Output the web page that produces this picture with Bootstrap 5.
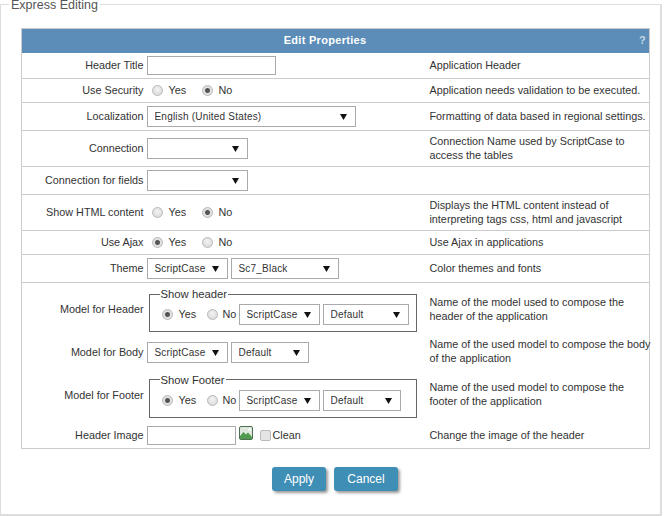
<!DOCTYPE html>
<html lang="en">
<head>
    <meta charset="UTF-8">
    <meta name="viewport" content="width=device-width, initial-scale=1.0">
    <title>Express Editing</title>
    <link href="https://cdn.jsdelivr.net/npm/bootstrap@5.3.0/dist/css/bootstrap.min.css" rel="stylesheet">
    <style>
        body {
            font-family: "Liberation Sans", Arial, sans-serif;
            font-size: 10.800px;
            color: #333;
            background: #fff;
            overflow: hidden;
        }
        .express-box {
            width: 662px;
            height: 516px;
            padding: 0;
            border: 2px solid #ddd;
            border-left-width: 1px;
            border-top-width: 1px;
        }
        .express-box > legend {
            float: none;
            width: auto;
            margin: 0 0 0 8px;
            padding: 1px 2px 0;
            font-size: 12.500px;
            line-height: 8px;
            color: #555;
        }
        .props-table {
            width: 629px;
            table-layout: fixed;
            border: 1px solid #ccc;
            margin: 19px 0 0 20px;
            color: #333;
        }
        .col-label { width: 125px; }
        .col-help { width: 220px; }
        .props-table td {
            padding: 3px 0;
            border-bottom: 1px solid #ccc;
            vertical-align: middle;
            line-height: 15px;
        }
        .props-table tr.no-line td { border-bottom: 0; }
        .props-table tr.row-tight td { height: 24px; padding-top: 0; padding-bottom: 0; }
        .props-table tr.row-model-h td { height: 55px; padding-top: 0; padding-bottom: 0; }
        .props-table tr.row-model-b td { height: 30px; padding-top: 0; padding-bottom: 0; }
        .props-table tr.row-model-f td { height: 56px; padding-top: 0; padding-bottom: 0; }
        .props-table .label-cell { padding-right: 3px; text-align: right; }
        .props-table .help-cell { padding: 3px 0 4px; line-height: 14px; white-space: nowrap; }
        .props-table tr.no-line td.help-cell { padding-bottom: 2px; }
        .props-table .props-head {
            height: 24px;
            padding: 0;
            border-bottom: 0;
            background: #5b8db8;
            color: #fff;
            font-size: 11px;
            font-weight: bold;
            letter-spacing: .3px;
        }
        .props-head .help-mark { width: 21px; color: #c5d6e6; padding-right: 3px; text-align: right; }
        .plain-input {
            display: block;
            height: 19px;
            border: 1px solid #aaa;
            background: #fff;
        }
        .w-title { width: 129px; }
        .w-image { width: 89px; }
        .select-pair { gap: 3px; }
        .plain-select {
            display: block;
            height: 21px;
            padding: 0 14px 0 7px;
            font-size: 10px;
            letter-spacing: .2px;
            color: #333;
            border: 1px solid #aaa;
            border-radius: 0;
            background: #fff url("data:image/svg+xml,%3Csvg xmlns='http://www.w3.org/2000/svg' width='7' height='7'%3E%3Cpath d='M0 1h7L3.500 7z' fill='%23111'/%3E%3C/svg%3E") no-repeat right 8px center;
            appearance: none;
        }
        .w-local { width: 209px; }
        .w-conn { width: 101px; }
        .w-sc { width: 81px; }
        .w-sc7 { width: 108px; }
        .w-def { width: 78px; }
        .w-def-h { width: 86px; }
        .pick-radio {
            appearance: none;
            width: 11px;
            height: 11px;
            margin: 0;
            flex: none;
            border: 1px solid #bbb;
            border-radius: 50%;
            background: radial-gradient(circle at 50% 40%, #f4f4f4, #d4d4d4);
        }
        .pick-radio:checked {
            background: radial-gradient(circle, #555 0 2px, #e2e2e2 3px, #d8d8d8);
        }
        .pick-check {
            appearance: none;
            width: 11px;
            height: 11px;
            margin: 0 2px 0 7px;
            border: 1px solid #bbb;
            border-radius: 2px;
            background: #e4e4e4;
        }
        .image-pick { margin: 0 0 5px 3px; }
        .radio-row { padding-left: 5px; }
        .radio-yes { width: 50px; }
        .radio-yes label, .radio-no label { margin-left: 6px; }
        .model-box {
            width: 268px;
            margin: 0 0 0 2px;
            padding: 3px 0 6px 12px;
            border: 1px solid #666;
        }
        .model-box > legend {
            float: none;
            width: auto;
            margin: 0 0 0 -2px;
            padding: 0 1px;
            font-size: 11.300px;
            line-height: 14px;
        }
        .model-box .radio-yes { width: 45px; }
        .model-box .radio-no { width: 32px; }
        .model-box .radio-no label { margin-left: 5px; }
        .action-btn {
            height: 24px;
            padding: 0;
            font-size: 12px;
            color: #fff;
            background: #3f8eb5;
            border: 0;
            border-radius: 3px;
            box-shadow: 2px 2px 3px #999;
        }
        .action-apply { width: 54px; }
        .action-cancel { width: 64px; }
        .action-row { margin: 18px 0 0 0; padding-left: 271px; }
    </style>
</head>

<body>
    <fieldset class="express-box">
        <legend>Express Editing</legend>
        <table class="props-table">
            <colgroup>
                <col class="col-label">
                <col>
                <col class="col-help">
            </colgroup>
            <tr>
                <td colspan="3" class="props-head">
                    <div class="d-flex">
                        <div class="flex-grow-1 text-center">Edit Properties</div>
                        <div class="help-mark">?</div>
                    </div>
                </td>
            </tr>
            <tr>
                <td class="label-cell">Header Title</td>
                <td><input type="text" class="plain-input w-title"></td>
                <td class="help-cell">Application Header</td>
            </tr>
            <tr class="row-tight">
                <td class="label-cell">Use Security</td>
                <td>
                    <div class="d-flex align-items-center radio-row">
                        <div class="d-flex align-items-center radio-yes"><input type="radio" class="pick-radio" name="sec"><label>Yes</label></div>
                        <div class="d-flex align-items-center radio-no"><input type="radio" class="pick-radio" name="sec" checked><label>No</label></div>
                    </div>
                </td>
                <td class="help-cell">Application needs validation to be executed.</td>
            </tr>
            <tr>
                <td class="label-cell">Localization</td>
                <td><select class="plain-select w-local"><option>English (United States)</option></select></td>
                <td class="help-cell">Formatting of data based in regional settings.</td>
            </tr>
            <tr>
                <td class="label-cell">Connection</td>
                <td><select class="plain-select w-conn"><option></option></select></td>
                <td class="help-cell">Connection Name used by ScriptCase to<br>access the tables</td>
            </tr>
            <tr>
                <td class="label-cell">Connection for fields</td>
                <td><select class="plain-select w-conn"><option></option></select></td>
                <td class="help-cell"></td>
            </tr>
            <tr>
                <td class="label-cell">Show HTML content</td>
                <td>
                    <div class="d-flex align-items-center radio-row">
                        <div class="d-flex align-items-center radio-yes"><input type="radio" class="pick-radio" name="html"><label>Yes</label></div>
                        <div class="d-flex align-items-center radio-no"><input type="radio" class="pick-radio" name="html" checked><label>No</label></div>
                    </div>
                </td>
                <td class="help-cell">Displays the HTML content instead of<br>interpreting tags css, html and javascript</td>
            </tr>
            <tr class="row-tight">
                <td class="label-cell">Use Ajax</td>
                <td>
                    <div class="d-flex align-items-center radio-row">
                        <div class="d-flex align-items-center radio-yes"><input type="radio" class="pick-radio" name="ajax" checked><label>Yes</label></div>
                        <div class="d-flex align-items-center radio-no"><input type="radio" class="pick-radio" name="ajax"><label>No</label></div>
                    </div>
                </td>
                <td class="help-cell">Use Ajax in applications</td>
            </tr>
            <tr>
                <td class="label-cell">Theme</td>
                <td>
                    <div class="d-flex select-pair">
                        <select class="plain-select w-sc"><option>ScriptCase</option></select>
                        <select class="plain-select w-sc7"><option>Sc7_Black</option></select>
                    </div>
                </td>
                <td class="help-cell">Color themes and fonts</td>
            </tr>
            <tr class="no-line row-model-h">
                <td class="label-cell">Model for Header</td>
                <td>
                    <fieldset class="model-box">
                        <legend>Show header</legend>
                        <div class="d-flex align-items-center">
                            <div class="d-flex align-items-center radio-yes"><input type="radio" class="pick-radio" name="mh" checked><label>Yes</label></div>
                            <div class="d-flex align-items-center radio-no"><input type="radio" class="pick-radio" name="mh"><label>No</label></div>
                            <div class="d-flex select-pair">
                                <select class="plain-select w-sc"><option>ScriptCase</option></select>
                                <select class="plain-select w-def-h"><option>Default</option></select>
                            </div>
                        </div>
                    </fieldset>
                </td>
                <td class="help-cell">Name of the model used to compose the<br>header of the application</td>
            </tr>
            <tr class="no-line row-model-b">
                <td class="label-cell">Model for Body</td>
                <td>
                    <div class="d-flex select-pair">
                        <select class="plain-select w-sc"><option>ScriptCase</option></select>
                        <select class="plain-select w-def"><option>Default</option></select>
                    </div>
                </td>
                <td class="help-cell">Name of the used model to compose the body<br>of the application</td>
            </tr>
            <tr class="no-line row-model-f">
                <td class="label-cell">Model for Footer</td>
                <td>
                    <fieldset class="model-box">
                        <legend>Show Footer</legend>
                        <div class="d-flex align-items-center">
                            <div class="d-flex align-items-center radio-yes"><input type="radio" class="pick-radio" name="mf" checked><label>Yes</label></div>
                            <div class="d-flex align-items-center radio-no"><input type="radio" class="pick-radio" name="mf"><label>No</label></div>
                            <div class="d-flex select-pair">
                                <select class="plain-select w-sc"><option>ScriptCase</option></select>
                                <select class="plain-select w-def"><option>Default</option></select>
                            </div>
                        </div>
                    </fieldset>
                </td>
                <td class="help-cell">Name of the used model to compose the<br>footer of the application</td>
            </tr>
            <tr>
                <td class="label-cell">Header Image</td>
                <td>
                    <div class="d-flex align-items-center">
                        <input type="text" class="plain-input w-image">
                        <svg width="14" height="14" viewBox="0 0 14 14" class="image-pick">
                            <rect x="0.500" y="0.500" width="13" height="13" rx="1.500" fill="#dfe8df" stroke="#4f6f55"/>
                            <circle cx="10.500" cy="3.500" r="1.200" fill="#fff"/>
                            <path d="M1 13V10L4.500 6L7 8.500L9 6.500L13 11V13Z" fill="#4f9a4f"/>
                        </svg>
                        <input type="checkbox" class="pick-check">
                        <label>Clean</label>
                    </div>
                </td>
                <td class="help-cell">Change the image of the header</td>
            </tr>
        </table>
        <div class="d-flex gap-2 action-row">
            <button type="button" class="btn action-btn action-apply">Apply</button>
            <button type="button" class="btn action-btn action-cancel">Cancel</button>
        </div>
    </fieldset>

    <script src="https://cdn.jsdelivr.net/npm/bootstrap@5.3.0/dist/js/bootstrap.bundle.min.js"></script>
</body>

</html>
